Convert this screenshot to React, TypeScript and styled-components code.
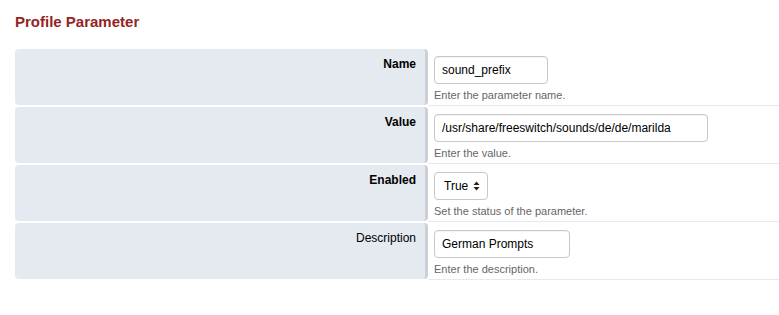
import React from "react";
import styled, { createGlobalStyle } from "styled-components";

const Global = createGlobalStyle`
  html, body { margin: 0; padding: 0; background: #ffffff; }
  body { font-family: "Liberation Sans", Arial, sans-serif; color: #000; }
`;

const Page = styled.div`
  padding: 13px 0 0 15px;
`;

const Title = styled.h1`
  margin: 0 0 19px 0;
  font-size: 15px;
  font-weight: bold;
  color: #952424;
  line-height: 17px;
`;

const Form = styled.div`
  display: grid;
  grid-template-columns: 413px 1fr;
  row-gap: 1px;
`;

const LabelCell = styled.div<{ $required?: boolean }>`
  box-sizing: border-box;
  height: 56px;
  background: #e5e9f0;
  border-right: 3px solid #cbcfd6;
  border-radius: 4px;
  text-align: right;
  padding: 8px 9px 0 0;
  font-size: 12px;
  line-height: 15px;
  font-weight: ${(p) => (p.$required ? "bold" : "normal")};
  color: #000;
`;

const FieldCell = styled.div`
  box-sizing: border-box;
  height: 57px;
  border-bottom: 1px solid #e5e9f0;
  padding: 7px 0 0 6px;
  display: flex;
  flex-direction: column;
  align-items: flex-start;
`;

const TextInput = styled.input<{ $w: number }>`
  box-sizing: border-box;
  width: ${(p) => p.$w}px;
  height: 28px;
  border: 1px solid #c8c8c8;
  border-radius: 4px;
  padding: 0 7px;
  font-family: "Liberation Sans", Arial, sans-serif;
  font-size: 12px;
  color: #000;
  background: #fff;
  box-shadow: inset 0 1px 1px rgba(0, 0, 0, 0.05);
  outline: none;
`;

const SelectWrap = styled.div`
  position: relative;
  width: 54px;
  height: 28px;
`;

const Select = styled.select`
  box-sizing: border-box;
  width: 54px;
  height: 28px;
  appearance: none;
  -webkit-appearance: none;
  border: 1px solid #c8c8c8;
  border-radius: 4px;
  padding: 0 0 0 9px;
  font-family: "Liberation Sans", Arial, sans-serif;
  font-size: 12px;
  color: #000;
  background: #fff;
  outline: none;
`;

const Arrows = styled.svg`
  position: absolute;
  right: 8px;
  top: 9px;
  pointer-events: none;
`;

const Help = styled.div`
  margin-top: 5px;
  font-size: 11px;
  line-height: 13px;
  color: #666666;
`;

export default function App() {
  return (
    <>
      <Global />
      <Page>
        <Title>Profile Parameter</Title>
        <Form>
          <LabelCell $required>Name</LabelCell>
          <FieldCell>
            <TextInput $w={114} defaultValue="sound_prefix" />
            <Help>Enter the parameter name.</Help>
          </FieldCell>

          <LabelCell $required>Value</LabelCell>
          <FieldCell>
            <TextInput $w={274} defaultValue="/usr/share/freeswitch/sounds/de/de/marilda" />
            <Help>Enter the value.</Help>
          </FieldCell>

          <LabelCell $required>Enabled</LabelCell>
          <FieldCell>
            <SelectWrap>
              <Select defaultValue="true">
                <option value="true">True</option>
                <option value="false">False</option>
              </Select>
              <Arrows width="7" height="10" viewBox="0 0 7 10">
                <path d="M3.5 0.5 L6.5 4 L0.5 4 Z" fill="#222" />
                <path d="M3.5 9.5 L6.5 6 L0.5 6 Z" fill="#222" />
              </Arrows>
            </SelectWrap>
            <Help>Set the status of the parameter.</Help>
          </FieldCell>

          <LabelCell>Description</LabelCell>
          <FieldCell>
            <TextInput $w={136} defaultValue="German Prompts" />
            <Help>Enter the description.</Help>
          </FieldCell>
        </Form>
      </Page>
    </>
  );
}
